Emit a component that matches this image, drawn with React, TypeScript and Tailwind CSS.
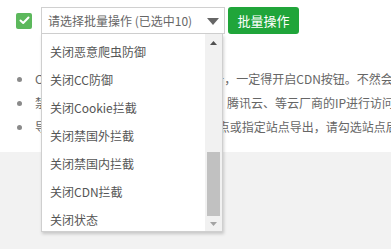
import React from "react";

const items = [
  "关闭恶意爬虫防御",
  "关闭CC防御",
  "关闭Cookie拦截",
  "关闭禁国外拦截",
  "关闭禁国内拦截",
  "关闭CDN拦截",
  "关闭状态",
];

const lines = [
  "CDN防护：\u00a0\u00a0\u00a0网站开启CDN加速服务，一定得开启CDN按钮。不然会拦截CDN节点IP",
  "禁国外拦截亚马逊、谷歌、阿里云、腾讯云、等云厂商的IP进行访问",
  "导出： 支持导出全部站点或单个站点或指定站点导出，请勾选站点后操作",
];

export default function App() {
  return (
    <div className="w-[391px] h-[249px] overflow-hidden bg-[#f2f2f2] font-['Noto_Sans_CJK_SC','Noto_Sans',sans-serif]">
      <div className="bg-white h-[152px] pt-[7px]">
        <div className="flex items-center h-[27px]">
          <div className="ml-[16px] w-[16px] h-[16px] rounded-[2px] bg-[#5cb85c] flex items-center justify-center">
            <svg width="11" height="9" viewBox="0 0 11 9" fill="none">
              <path d="M1.5 4.5 L4.2 7 L9.5 1.5" stroke="white" strokeWidth="2" strokeLinecap="round" strokeLinejoin="round" />
            </svg>
          </div>
          <div className="relative ml-[9px] w-[184px] h-[27px] border border-[#d0d0d0] bg-white flex items-center">
            <span className="pl-[6px] text-[12px] text-[#666] leading-none whitespace-nowrap">请选择批量操作 (已选中10)</span>
            <svg className="absolute left-[165px] top-[10px]" width="12" height="7" viewBox="0 0 12 7">
              <path d="M0 0 H12 L6 7 Z" fill="#666" />
            </svg>
            <div className="absolute left-[-1px] top-[26px] w-[182px] h-[198px] bg-white border-x border-b border-[#cfcfcf] shadow-[1px_2px_3px_rgba(0,0,0,0.18)] z-10 flex overflow-hidden">
              <div className="flex-1 pt-[4px] overflow-hidden">
                {items.map((t) => (
                  <div key={t} className="h-[28px] flex items-center pl-[8px] text-[12px] text-[#555] whitespace-nowrap">
                    {t}
                  </div>
                ))}
              </div>
              <div className="w-[17px] h-full bg-[#f1f1f1] flex flex-col items-center">
                <div className="h-[17px] w-full flex items-center justify-center">
                  <svg width="7" height="4" viewBox="0 0 7 4">
                    <path d="M0 4 H7 L3.5 0 Z" fill="#505050" />
                  </svg>
                </div>
                <div className="flex-1" />
                <div className="w-[13px] h-[64px] bg-[#c1c1c1]" />
                <div className="h-[15px] w-full flex items-center justify-center">
                  <svg width="7" height="4" viewBox="0 0 7 4">
                    <path d="M0 0 H7 L3.5 4 Z" fill="#a3a3a3" />
                  </svg>
                </div>
              </div>
            </div>
          </div>
          <button className="ml-[3px] w-[71px] h-[27px] rounded-[3px] bg-[#20a53a] text-white text-[13px] leading-none">
            批量操作
          </button>
        </div>
        <ul className="mt-[33px]">
          {lines.map((l) => (
            <li key={l} className="h-[24px] flex items-center whitespace-nowrap">
              <span className="ml-[17px] w-[5px] h-[5px] rounded-full bg-[#8a8a8a] shrink-0" />
              <span className="ml-[13px] text-[12px] text-[#666]">{l}</span>
            </li>
          ))}
        </ul>
      </div>
    </div>
  );
}
